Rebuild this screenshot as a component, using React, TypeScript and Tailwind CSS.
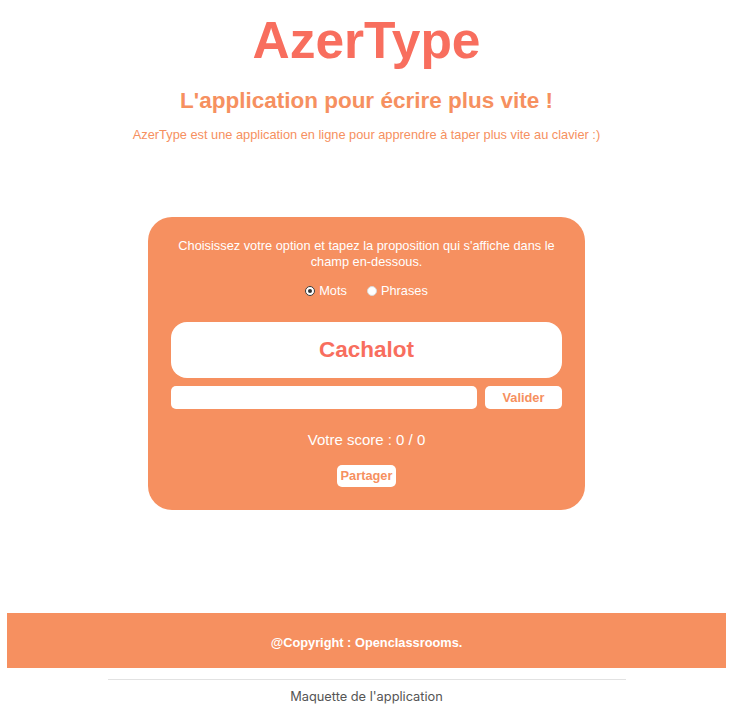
import React from "react";

const arial = { fontFamily: '"Liberation Sans", Arial, sans-serif' };

function Radio({ label, checked }: { label: string; checked?: boolean }) {
  return (
    <label className="flex items-center gap-[4px]">
      <span
        className={
          checked
            ? "flex h-[10px] w-[10px] items-center justify-center rounded-full border border-[#3b3b3b] bg-white"
            : "h-[10px] w-[10px] rounded-full border border-[#d8d8d8] bg-white"
        }
      >
        {checked && <span className="h-[4px] w-[4px] rounded-full bg-[#333]" />}
      </span>
      <span>{label}</span>
    </label>
  );
}

export default function App() {
  return (
    <div className="min-h-screen bg-white">
      <div className="px-[7px]" style={arial}>
        <header className="flex flex-col items-center">
          <h1 className="mt-[14px] text-[51.5px] font-bold leading-[52px] text-[#f86e5e]">
            AzerType
          </h1>
          <h2 className="mt-[22px] text-[22.5px] font-bold leading-[26px] text-[#f69060]">
            L'application pour écrire plus vite !
          </h2>
          <p className="mt-[13px] text-[12.8px] leading-[16px] text-[#f69060]">
            AzerType est une application en ligne pour apprendre à taper plus vite au clavier :)
          </p>
        </header>

        <main className="mt-[74px] flex justify-center">
          <section className="flex w-[437px] flex-col items-center rounded-[24px] bg-[#f69060] px-[23px] pb-[23px] pt-[21px] text-white">
            <p className="px-[6px] text-center text-[12.8px] leading-[16px]">
              Choisissez votre option et tapez la proposition qui s'affiche dans le champ en-dessous.
            </p>
            <div className="mt-[13px] flex h-[16px] items-center gap-[20px] text-[12.8px]">
              <Radio label="Mots" checked />
              <Radio label="Phrases" />
            </div>
            <div className="mt-[23px] flex h-[56px] w-full items-center justify-center rounded-[16px] bg-white">
              <span className="text-[22.5px] font-bold text-[#f86e5e]">Cachalot</span>
            </div>
            <div className="mt-[8px] flex w-full gap-[8px]">
              <input className="h-[23px] flex-1 rounded-[5px] bg-white outline-none" />
              <button className="h-[23px] w-[77px] rounded-[5px] bg-white text-[12.8px] font-bold text-[#f69060]">
                Valider
              </button>
            </div>
            <p className="mt-[22px] text-[15px] leading-[18px]">Votre score : 0 / 0</p>
            <button className="mt-[16px] h-[22px] rounded-[5px] bg-white px-[4px] text-[12.8px] font-bold text-[#f69060]">
              Partager
            </button>
          </section>
        </main>

        <footer className="mt-[103px] flex h-[55px] items-center justify-center bg-[#f69060] pt-[4px]">
          <span className="text-[12.8px] font-bold text-white">@Copyright : Openclassrooms.</span>
        </footer>
      </div>

      <div className="mx-auto mt-[11px] w-[518px] border-t border-[#e2e2e2]" />
      <p
        className="mt-[7px] text-center text-[12.8px] text-[#555]"
        style={{ fontFamily: "Inter, sans-serif" }}
      >
        Maquette de l'application
      </p>
    </div>
  );
}
